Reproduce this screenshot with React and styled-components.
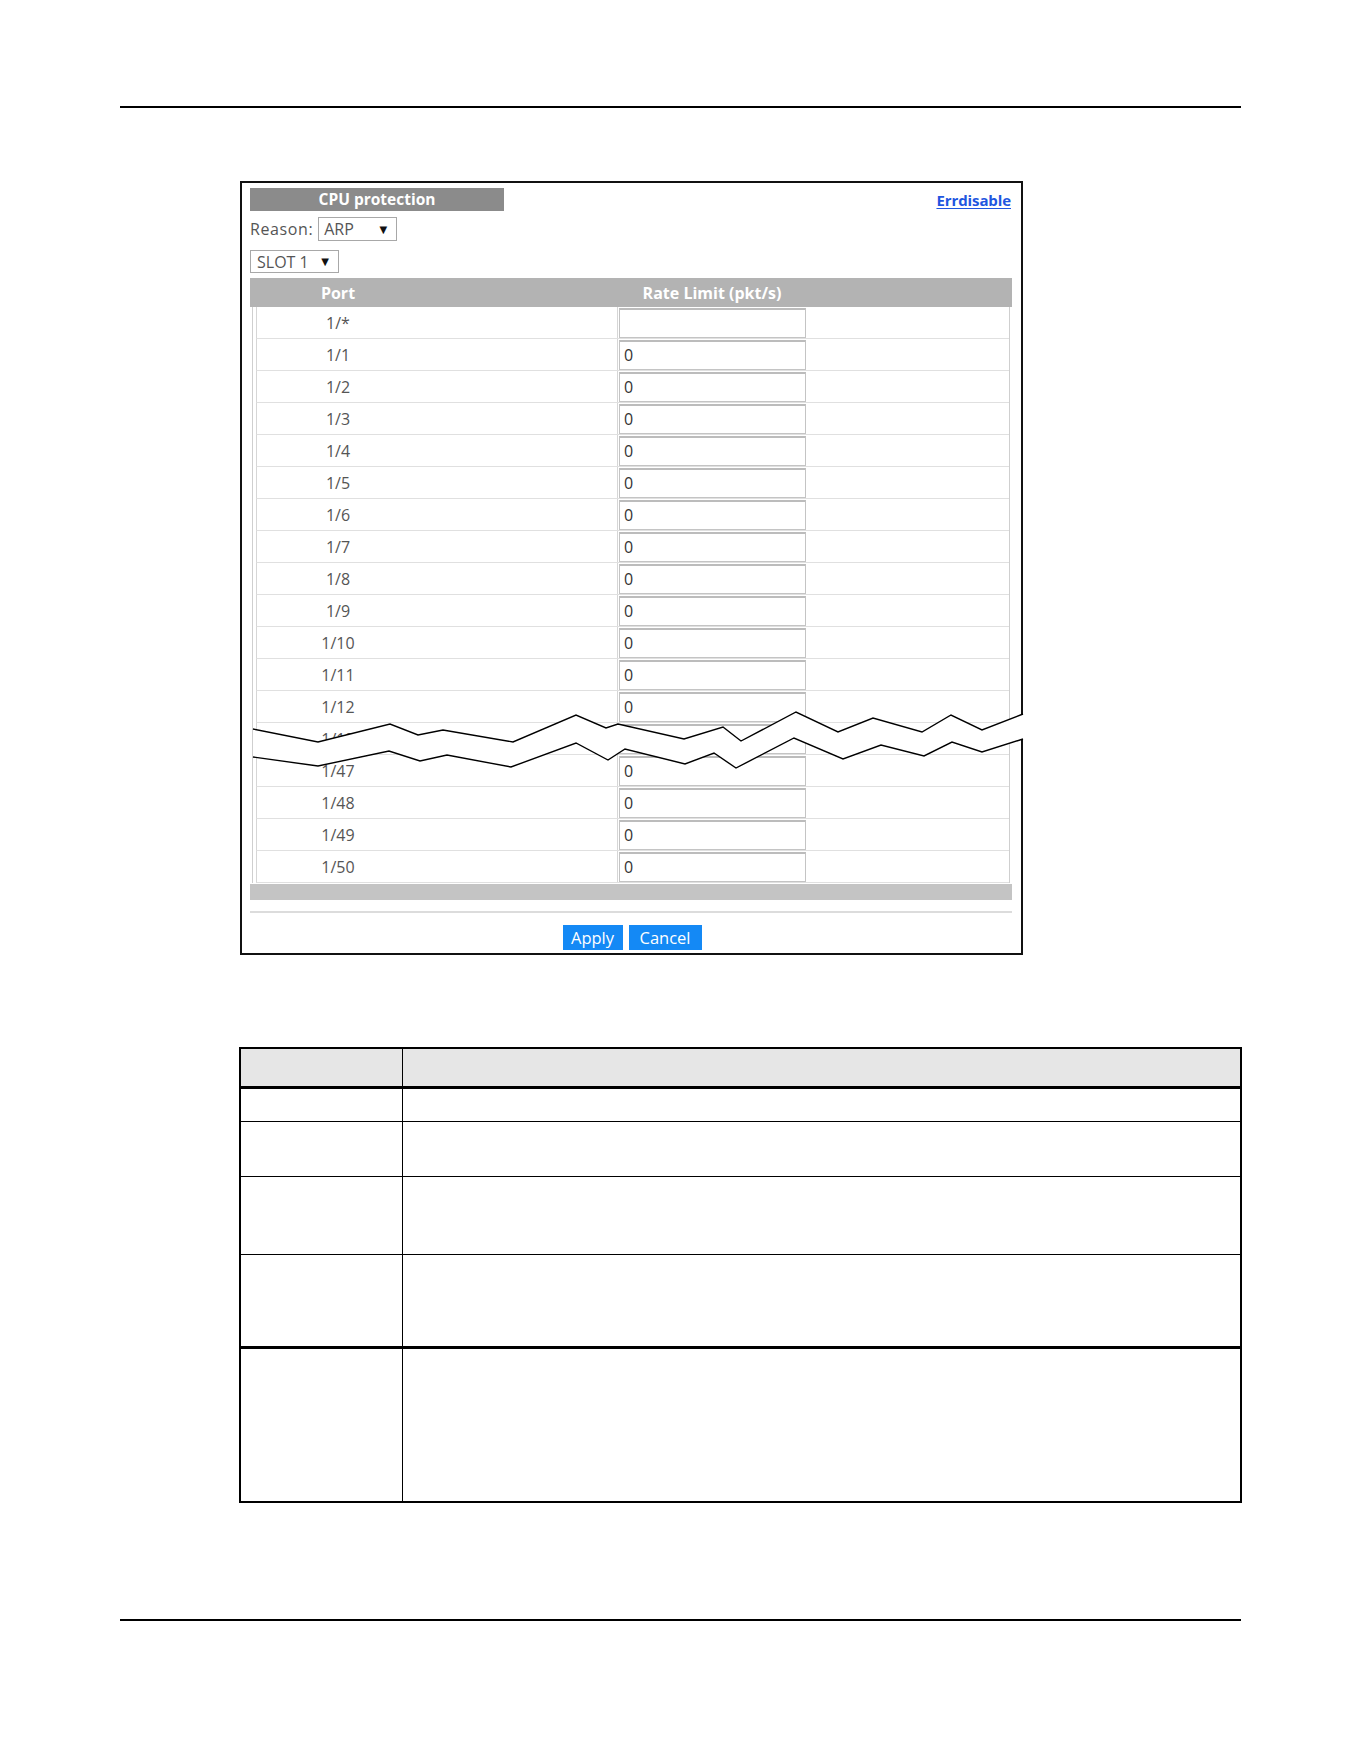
import React from "react";
import styled, { createGlobalStyle } from "styled-components";

const Global = createGlobalStyle`
  html, body { margin: 0; padding: 0; background: #fff; }
  body { font-family: "Open Sans", "Liberation Sans", sans-serif; color: #000; }
`;

const Page = styled.div`
  width: 1361px;
  min-height: 1761px;
  display: flex;
  flex-direction: column;
`;

const Rule = styled.div`
  margin-left: 120px;
  width: 1121px;
  height: 2px;
  background: #000;
  margin-top: ${(p) => p.$top}px;
`;

const Panel = styled.div`
  position: relative;
  box-sizing: border-box;
  margin: 73px 0 0 240px;
  width: 783px;
  border: 2px solid #111;
  padding: 5px 9px 3px 8px;
  display: flex;
  flex-direction: column;
`;

const TopRow = styled.div`
  display: flex;
  justify-content: space-between;
  align-items: center;
  height: 23px;
`;

const TitleBar = styled.div`
  width: 254px;
  height: 23px;
  background: #8b8b8b;
  color: #fff;
  font-weight: 700;
  font-size: 15.5px;
  line-height: 23px;
  text-align: center;
`;

const Link = styled.a`
  color: #1f56e0;
  font-weight: 700;
  font-size: 15px;
  text-decoration: underline;
  text-underline-offset: 2px;
  letter-spacing: -0.1px;
  margin-right: 1px;
`;

const FieldRow = styled.div`
  display: flex;
  align-items: center;
  gap: 5px;
  margin-top: ${(p) => p.$top}px;
`;

const Label = styled.span`
  font-size: 16px;
  letter-spacing: 0.6px;
  color: #555;
`;

const Select = styled.div`
  box-sizing: border-box;
  width: ${(p) => p.$w}px;
  height: ${(p) => p.$h}px;
  border: 1px solid #a8a8a8;
  background: #fff;
  display: flex;
  align-items: center;
  justify-content: space-between;
  padding: 0 9px 0 ${(p) => p.$pl}px;
  font-size: 16px;
  color: #555;
`;

const Caret = styled.span`
  font-family: "DejaVu Sans", sans-serif;
  font-size: 10px;
  color: #111;
`;

const HeaderRow = styled.div`
  margin-top: 5px;
  height: 29px;
  background: #b3b3b3;
  display: grid;
  grid-template-columns: 176px 191px 190px 1fr;
  align-items: center;
  color: #fff;
  font-weight: 700;
  font-size: 16px;
`;

const HeadCell = styled.div`
  text-align: center;
`;

const Body = styled.div`
  margin: 0 2px;
  border-left: 1px solid #cfcfcf;
  border-right: 1px solid #cfcfcf;
  padding-left: 3px;
`;

const Row = styled.div`
  box-sizing: border-box;
  height: 32px;
  display: grid;
  grid-template-columns: 162px 198px 190px 1fr;
  border-left: 1px solid #d6d6d6;
  border-bottom: 1px solid #e0e0e0;
`;

const PortCell = styled.div`
  display: flex;
  align-items: center;
  justify-content: center;
  font-size: 16px;
  color: #555;
`;

const RateCell = styled.div`
  border-left: 1px solid #d6d6d6;
  padding-left: 1px;
  display: flex;
  align-items: center;
`;

const Input = styled.div`
  box-sizing: border-box;
  width: 187px;
  height: 30px;
  border: 1px solid #c4c4c4;
  border-top: 2px solid #bcbcbc;
  padding-left: 4px;
  display: flex;
  align-items: center;
  font-size: 16px;
  color: #333;
`;

const FootBand = styled.div`
  margin-top: 1px;
  height: 16px;
  background: #c4c4c4;
`;

const Separator = styled.div`
  margin-top: 11px;
  height: 2px;
  background: #dcdcdc;
`;

const Actions = styled.div`
  margin-top: 12px;
  display: flex;
  justify-content: center;
  gap: 6px;
  padding-left: 2px;
`;

const Button = styled.button`
  width: ${(p) => p.$w}px;
  height: 25px;
  border: none;
  background: #1489f5;
  color: #fff;
  font-family: inherit;
  font-size: 16.5px;
  padding: 0;
  line-height: 25px;
`;

const Break = styled.svg`
  position: absolute;
  left: 8px;
  top: 520px;
  overflow: visible;
`;

const DescTable = styled.table`
  margin: 92px 0 0 239px;
  width: 1003px;
  border-collapse: collapse;
  border: 2px solid #000;
  table-layout: fixed;
`;

const Th = styled.th`
  background: #e6e6e6;
  height: 37px;
  border-left: 1px solid #000;
  border-bottom: 3px solid #000;
  padding: 0;
`;

const Td = styled.td`
  height: ${(p) => p.$h}px;
  border-left: 1px solid #000;
  border-bottom: ${(p) => (p.$thick ? "3px" : "1px")} solid #000;
  padding: 0;
`;

const rows = [
  ["1/*", ""],
  ...Array.from({ length: 13 }, (_, i) => [`1/${i + 1}`, "0"]),
  ...[47, 48, 49, 50].map((n) => [`1/${n}`, "0"]),
];

const top = [
  [3, 26], [68, 39], [140, 21], [168, 32], [193, 27], [263, 39], [326, 12],
  [356, 25], [368, 21], [434, 36], [473, 24], [491, 38], [546, 9], [588, 29],
  [623, 15], [672, 29], [701, 12], [732, 27], [773, 11],
];
const bottom = [
  [3, 54], [68, 63], [139, 48], [170, 58], [197, 52], [261, 64], [326, 40],
  [358, 57], [375, 46], [435, 61], [464, 50], [486, 65], [544, 35], [593, 56],
  [631, 42], [674, 53], [702, 39], [732, 49], [773, 36],
];
const pts = (a) => a.map(([x, y]) => `${x},${y}`).join(" ");

const descRows = [
  [32, false],
  [54, false],
  [77, false],
  [91, true],
  [152, false],
];

export default function App() {
  return (
    <Page>
      <Global />
      <Rule $top={106} />
      <Panel>
        <TopRow>
          <TitleBar>CPU protection</TitleBar>
          <Link href="#">Errdisable</Link>
        </TopRow>
        <FieldRow $top={6}>
          <Label>Reason:</Label>
          <Select $w={79} $h={24} $pl={5}>
            ARP <Caret>▼</Caret>
          </Select>
        </FieldRow>
        <FieldRow $top={9}>
          <Select $w={89} $h={23} $pl={6}>
            SLOT 1 <Caret>▼</Caret>
          </Select>
        </FieldRow>
        <HeaderRow>
          <HeadCell>Port</HeadCell>
          <div />
          <HeadCell>Rate Limit (pkt/s)</HeadCell>
          <div />
        </HeaderRow>
        <Body>
          {rows.map(([port, val]) => (
            <Row key={port}>
              <PortCell>{port}</PortCell>
              <div />
              <RateCell>
                <Input>{val}</Input>
              </RateCell>
              <div />
            </Row>
          ))}
        </Body>
        <FootBand />
        <Separator />
        <Actions>
          <Button $w={60}>Apply</Button>
          <Button $w={73}>Cancel</Button>
        </Actions>
        <Break width="773" height="70">
          <polygon points={`${pts(top)} ${pts([...bottom].reverse())}`} fill="#fff" />
          <polyline points={pts(top)} fill="none" stroke="#000" strokeWidth="1.4" />
          <polyline points={pts(bottom)} fill="none" stroke="#000" strokeWidth="1.4" />
        </Break>
      </Panel>
      <DescTable>
        <colgroup>
          <col style={{ width: "162px" }} />
          <col />
        </colgroup>
        <thead>
          <tr>
            <Th />
            <Th />
          </tr>
        </thead>
        <tbody>
          {descRows.map(([h, thick], i) => (
            <tr key={i}>
              <Td $h={h} $thick={thick} />
              <Td $h={h} $thick={thick} />
            </tr>
          ))}
        </tbody>
      </DescTable>
      <Rule $top={116} />
    </Page>
  );
}
